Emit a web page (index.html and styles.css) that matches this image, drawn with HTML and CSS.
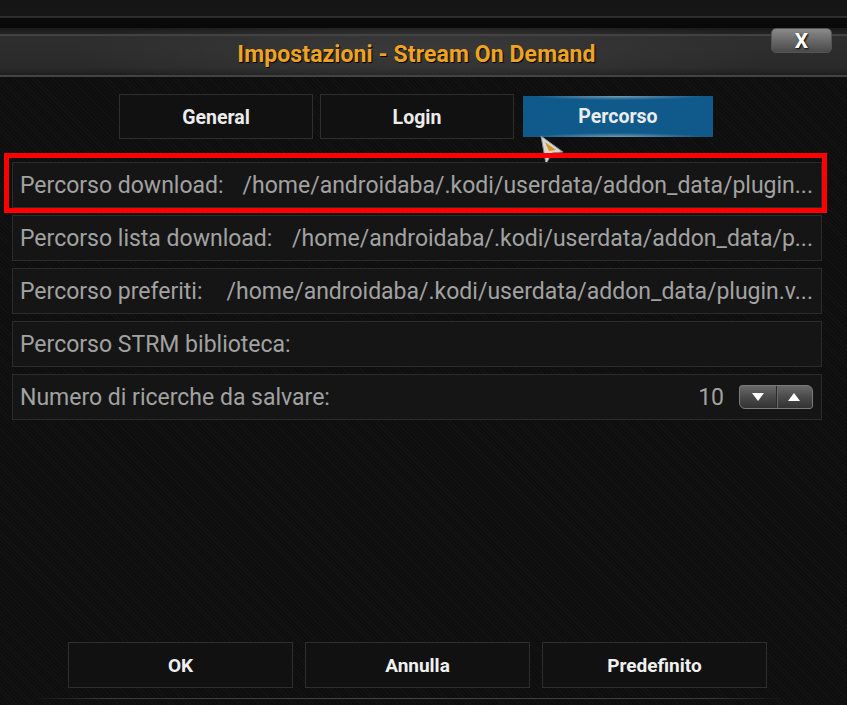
FILE: index.html
```html
<!DOCTYPE html>
<html lang="it">
<head>
<meta charset="utf-8">
<title>Impostazioni - Stream On Demand</title>
<link rel="stylesheet" href="styles.css">
</head>
<body>
<div class="dialog">
  <div class="topstrip"></div>
  <div class="header">
    <h1 class="title">Impostazioni - Stream On Demand</h1>
    <button class="close">X</button>
  </div>

  <div class="tabs">
    <div class="tab">General</div>
    <div class="tab">Login</div>
    <div class="tab tab-active">Percorso</div>
    <svg class="cursor" width="26" height="30" viewBox="0 0 26 30">
      <polygon points="1,1 23,17 12,18 6,29" fill="#d8d8d8" stroke="#8a8a8a" stroke-width="1"/>
      <polygon points="5,7 16,15 9,16" fill="#d9961c"/>
    </svg>
  </div>

  <div class="settings">
    <div class="row">
      <span class="label">Percorso download:</span>
      <span class="value">/home/androidaba/.kodi/userdata/addon_data/plugin...</span>
    </div>
    <div class="row">
      <span class="label">Percorso lista download:</span>
      <span class="value">/home/androidaba/.kodi/userdata/addon_data/p...</span>
    </div>
    <div class="row">
      <span class="label">Percorso preferiti:</span>
      <span class="value">/home/androidaba/.kodi/userdata/addon_data/plugin.v...</span>
    </div>
    <div class="row">
      <span class="label">Percorso STRM biblioteca:</span>
    </div>
    <div class="row">
      <span class="label">Numero di ricerche da salvare:</span>
      <span class="number">10</span>
      <div class="spinner">
        <span class="spin"><svg width="12" height="10" viewBox="0 0 12 10"><polygon points="0,1 12,1 6,9" fill="#fff"/></svg></span>
        <span class="spin"><svg width="12" height="10" viewBox="0 0 12 10"><polygon points="0,9 12,9 6,1" fill="#fff"/></svg></span>
      </div>
    </div>
    <div class="highlight"></div>
  </div>

  <div class="footer">
    <div class="btn">OK</div>
    <div class="btn">Annulla</div>
    <div class="btn">Predefinito</div>
  </div>
  <div class="bottomline"></div>
</div>
</body>
</html>
```

FILE: styles.css
```css
* { box-sizing: border-box; }

html, body {
  margin: 0;
  padding: 0;
}

body {
  width: 847px;
  height: 705px;
  overflow: hidden;
  background: #0d0d0d;
  font-family: Roboto, "Liberation Sans", sans-serif;
}

.dialog {
  position: relative;
  display: flex;
  flex-direction: column;
  height: 705px;
  background:
    repeating-linear-gradient(45deg, rgba(255,255,255,0.018) 0 1px, transparent 1px 3px),
    #0e0e0e;
}

.topstrip {
  height: 28px;
  background: linear-gradient(to bottom, #151515 0, #161616 16px, #4a4a4a 17px, #0a0a0a 18px, #080808 28px);
}

.header {
  position: relative;
  height: 49px;
  display: flex;
  align-items: center;
  justify-content: center;
  padding-right: 14px;
  background:
    radial-gradient(ellipse 60% 120% at 50% 50%, rgba(70,70,70,0.55), rgba(30,30,30,0) 70%),
    linear-gradient(to bottom, #1a1a1a 0, #242424 6px, #5a5a5a 7px, #2e2e2e 8px, #2a2a2a 40px, #1e1e1e 47px, #6a6a6a 48px, #1a1a1a 49px);
}

.title {
  margin: 0;
  font-size: 23px;
  font-weight: 700;
  color: #eda425;
  letter-spacing: 0.1px;
  text-shadow: 1px 1px 1px #000;
  transform: translateY(2px);
}

.close {
  position: absolute;
  top: 0;
  right: 15px;
  width: 61px;
  height: 25px;
  border: 1px solid #555;
  border-radius: 5px;
  background: linear-gradient(to bottom, #8a8a8a, #6c6c6c 45%, #4a4a4a 100%);
  color: #fff;
  font-family: Roboto, sans-serif;
  font-weight: 700;
  font-size: 21px;
  line-height: 22px;
  padding: 0;
  text-shadow: 1px 1px 2px #000;
}

.tabs {
  position: relative;
  display: flex;
  gap: 7px;
  margin-top: 17px;
  padding-left: 119px;
}

.tab {
  width: 194px;
  height: 45px;
  border: 1px solid #2e2e2e;
  background: #111;
  color: #ececec;
  font-size: 19.5px;
  font-weight: 700;
  display: flex;
  align-items: center;
  justify-content: center;
  padding-top: 2px;
}

.tab-active {
  width: 190px;
  height: 41px;
  margin: 2px 0 0 2px;
  border: none;
  padding-top: 0;
  background:
    radial-gradient(ellipse 45% 10% at 50% 0, rgba(220,220,220,0.5), rgba(0,0,0,0)),
    radial-gradient(ellipse 45% 10% at 50% 100%, rgba(220,220,220,0.5), rgba(0,0,0,0)),
    #0f5a8a;
}

.cursor {
  position: absolute;
  left: 540px;
  top: 41px;
}

.settings {
  position: relative;
  display: flex;
  flex-direction: column;
  gap: 7px;
  margin-top: 23px;
  padding-left: 12px;
}

.row {
  width: 810px;
  height: 46px;
  border: 1px solid #2c2c2c;
  background: rgba(22,22,22,0.85);
  display: flex;
  align-items: center;
  padding: 0 8px 0 7px;
  font-size: 23px;
  color: #a2a2a2;
  white-space: nowrap;
}

.label {
  flex: none;
}

.value {
  margin-left: auto;
}

.number {
  margin-left: auto;
  margin-right: 15px;
}

.spinner {
  display: flex;
  width: 74px;
  height: 24px;
  border: 1px solid #7a7a7a;
  border-radius: 3px 6px 3px 6px;
  background: linear-gradient(to bottom, #6a6a6a, #4a4a4a 50%, #333 100%);
  overflow: hidden;
}

.spin {
  flex: 1;
  display: flex;
  align-items: center;
  justify-content: center;
}

.spin + .spin {
  border-left: 1px solid #2a2a2a;
  box-shadow: inset 1px 0 0 #6a6a6a;
}

.highlight {
  position: absolute;
  left: 4px;
  top: -9px;
  width: 823px;
  height: 60px;
  border: 5px solid #f00;
}

.footer {
  display: flex;
  gap: 12px;
  margin-top: auto;
  padding-left: 68px;
}

.btn {
  width: 225px;
  height: 46px;
  border: 1px solid #2e2e2e;
  background: #111;
  color: #f0f0f0;
  font-size: 19px;
  font-weight: 700;
  display: flex;
  align-items: center;
  justify-content: center;
}

.bottomline {
  height: 1px;
  margin: 10px 60px 6px 30px;
  background: linear-gradient(to right, transparent, #3a3a3a 10%, #444 50%, #3a3a3a 90%, transparent);
}
```
